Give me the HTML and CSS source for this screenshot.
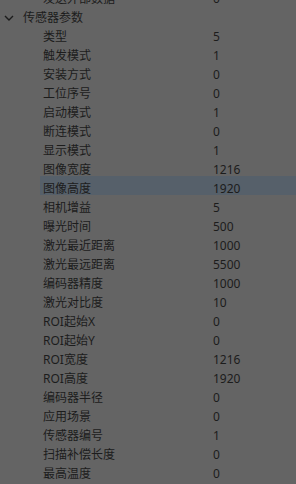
FILE: index.html
```html
<!DOCTYPE html>
<html lang="zh-CN">
<head>
  <meta charset="UTF-8" />
  <title>传感器参数</title>
  <link rel="stylesheet" href="styles.css">
</head>
<body>
  <div class="tree">
    <div class="row child"><span class="name">发送外部数据</span><span class="value">0</span></div>

    <div class="row group">
      <svg class="chevron" width="10" height="6" viewBox="0 0 10 6">
        <polyline points="1,1 5,5 9,1" fill="none" stroke="#1c1c1c" stroke-width="1.4" />
      </svg>
      <span class="name">传感器参数</span>
    </div>

    <div class="row child"><span class="name">类型</span><span class="value">5</span></div>
    <div class="row child"><span class="name">触发模式</span><span class="value">1</span></div>
    <div class="row child"><span class="name">安装方式</span><span class="value">0</span></div>
    <div class="row child"><span class="name">工位序号</span><span class="value">0</span></div>
    <div class="row child"><span class="name">启动模式</span><span class="value">1</span></div>
    <div class="row child"><span class="name">断连模式</span><span class="value">0</span></div>
    <div class="row child"><span class="name">显示模式</span><span class="value">1</span></div>
    <div class="row child"><span class="name">图像宽度</span><span class="value">1216</span></div>
    <div class="row child selected"><span class="name">图像高度</span><span class="value">1920</span></div>
    <div class="row child"><span class="name">相机增益</span><span class="value">5</span></div>
    <div class="row child"><span class="name">曝光时间</span><span class="value">500</span></div>
    <div class="row child"><span class="name">激光最近距离</span><span class="value">1000</span></div>
    <div class="row child"><span class="name">激光最远距离</span><span class="value">5500</span></div>
    <div class="row child"><span class="name">编码器精度</span><span class="value">1000</span></div>
    <div class="row child"><span class="name">激光对比度</span><span class="value">10</span></div>
    <div class="row child"><span class="name">ROI起始X</span><span class="value">0</span></div>
    <div class="row child"><span class="name">ROI起始Y</span><span class="value">0</span></div>
    <div class="row child"><span class="name">ROI宽度</span><span class="value">1216</span></div>
    <div class="row child"><span class="name">ROI高度</span><span class="value">1920</span></div>
    <div class="row child"><span class="name">编码器半径</span><span class="value">0</span></div>
    <div class="row child"><span class="name">应用场景</span><span class="value">0</span></div>
    <div class="row child"><span class="name">传感器编号</span><span class="value">1</span></div>
    <div class="row child"><span class="name">扫描补偿长度</span><span class="value">0</span></div>
    <div class="row child"><span class="name">最高温度</span><span class="value">0</span></div>
  </div>
</body>
</html>
```

FILE: styles.css
```css
* {
  box-sizing: border-box;
}

html, body {
  margin: 0;
  padding: 0;
  height: 100%;
  background: #646464;
  overflow: hidden;
}

body {
  color: #1c1c1c;
  font-family: "Noto Sans", "Noto Sans CJK SC", sans-serif;
  font-size: 12px;
}

.tree {
  margin-top: -14px;
}

.row {
  display: flex;
  align-items: center;
  height: 19px;
  padding-top: 6px;
  line-height: 13px;
  white-space: nowrap;
}

.group {
  padding-left: 4px;
}

.chevron {
  flex: none;
  width: 10px;
  margin-right: 9px;
}

.child {
  margin-left: 40px;
  padding-left: 3px;
}

.child .name {
  width: 170px;
}

.selected {
  background: #56606a;
}
```
